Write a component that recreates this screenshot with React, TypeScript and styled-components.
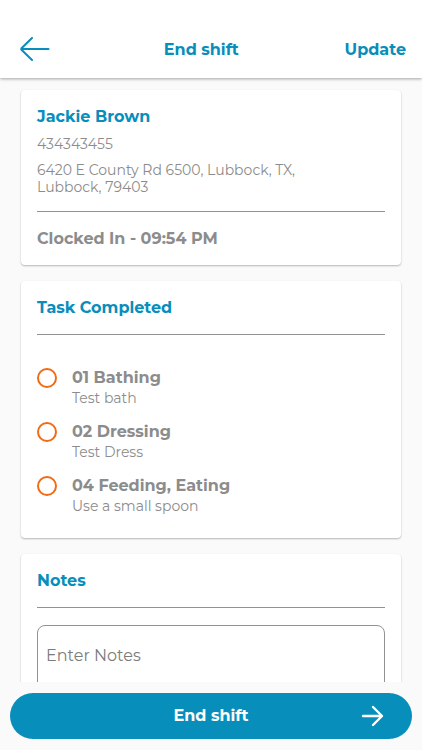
import React from "react";
import styled, { createGlobalStyle } from "styled-components";

const blue = "#078ebb";
const gray = "#8c8c8c";
const orange = "#f26a14";

const GlobalStyle = createGlobalStyle`
  *, *::before, *::after { box-sizing: border-box; }
  body {
    margin: 0;
    background: #fafafa;
    font-family: Montserrat, Inter, "Open Sans", sans-serif;
    color: ${gray};
  }
  button, input, textarea { font-family: inherit; }
  h1, h2, p, ul { margin: 0; padding: 0; }
`;

const Screen = styled.div`
  height: 100vh;
  display: flex;
  flex-direction: column;
  overflow: hidden;
`;

const Header = styled.header`
  flex: none;
  z-index: 1;
  display: flex;
  justify-content: space-between;
  align-items: center;
  height: 78px;
  padding: 22px 16px 0 20px;
  background: #fff;
  box-shadow: 0 1px 3px rgba(0, 0, 0, 0.35);
`;

const TextButton = styled.button`
  padding: 0;
  border: 0;
  background: none;
  color: ${blue};
  font-size: 16px;
  line-height: 20px;
  font-weight: 700;
`;

const BackButton = styled(TextButton)`
  display: flex;
  width: 38px;
`;

const Title = styled.h1`
  color: ${blue};
  font-size: 16px;
  line-height: 20px;
  font-weight: 700;
`;

const Content = styled.main`
  flex: 1;
  min-height: 0;
  overflow-y: auto;
  scrollbar-width: none;
  display: flex;
  flex-direction: column;
  gap: 16px;
  padding: 12px 21px;
`;

const Card = styled.section<{ $bottom?: number }>`
  flex: none;
  padding: 16px 16px ${(p) => p.$bottom ?? 16}px;
  border-radius: 4px;
  background: #fff;
  box-shadow: 0 1px 2px rgba(0, 0, 0, 0.28);
`;

const CardTitle = styled.h2`
  color: ${blue};
  font-size: 16px;
  line-height: 22px;
  font-weight: 700;
`;

const Details = styled.div`
  display: flex;
  flex-direction: column;
  gap: 9px;
  padding-top: 8px;
`;

const Detail = styled.p`
  max-width: 280px;
  font-size: 14px;
  line-height: 17px;
  font-weight: 400;
`;

const Divider = styled.hr`
  height: 1px;
  margin: 15px 0 17px;
  border: 0;
  background: #929292;
`;

const Strong = styled.p`
  font-size: 16px;
  line-height: 20px;
  font-weight: 700;
`;

const TaskList = styled.ul`
  display: flex;
  flex-direction: column;
  gap: 14px;
  padding-top: 16px;
  list-style: none;
`;

const TaskLabel = styled.label`
  display: flex;
  align-items: flex-start;
  gap: 15px;
`;

const Tick = styled.input`
  appearance: none;
  flex: none;
  width: 20px;
  height: 20px;
  margin: 0;
  border: 2px solid ${orange};
  border-radius: 50%;
  background: #fff;
  &:checked {
    background: ${orange};
    box-shadow: inset 0 0 0 3px #fff;
  }
`;

const TaskText = styled.span`
  display: flex;
  flex-direction: column;
  line-height: 20px;
`;

const TaskName = styled.span`
  font-size: 16px;
  font-weight: 700;
`;

const TaskNote = styled.span`
  font-size: 14px;
  font-weight: 400;
`;

const NotesField = styled.textarea`
  display: block;
  width: 100%;
  height: 120px;
  padding: 19px 8px;
  border: 1px solid #929292;
  border-radius: 8px;
  background: #fff;
  resize: none;
  font-size: 16px;
  line-height: 22px;
  font-weight: 400;
  &::placeholder {
    color: #7c7c7c;
    opacity: 1;
  }
`;

const Footer = styled.footer`
  flex: none;
  padding: 11px 10px;
`;

const SubmitButton = styled.button`
  width: 100%;
  height: 46px;
  display: grid;
  grid-template-columns: 1fr auto 1fr;
  align-items: center;
  padding: 0 28px;
  border: 0;
  border-radius: 23px;
  background: ${blue};
  color: #fff;
  font-size: 16px;
  line-height: 20px;
  font-weight: 700;
`;

const SubmitText = styled.span`
  grid-column: 2;
`;

const ForwardIcon = styled.svg`
  justify-self: end;
`;

const tasks = [
  { name: "01 Bathing", note: "Test bath" },
  { name: "02 Dressing", note: "Test Dress" },
  { name: "04 Feeding, Eating", note: "Use a small spoon" },
];

export default function App() {
  return (
    <>
      <GlobalStyle />
      <Screen>
        <Header>
          <BackButton type="button" aria-label="Back">
            <svg width="30" height="26" viewBox="0 0 30 26" fill="none" stroke={blue} strokeWidth="2" strokeLinecap="round" strokeLinejoin="round">
              <path d="M28.500 12H1.500M12 1L1.500 11.200Q1 12 1.500 12.800L12 23" />
            </svg>
          </BackButton>
          <Title>End shift</Title>
          <TextButton type="button">Update</TextButton>
        </Header>

        <Content>
          <Card>
            <CardTitle>Jackie Brown</CardTitle>
            <Details>
              <Detail>434343455</Detail>
              <Detail>6420 E County Rd 6500, Lubbock, TX, Lubbock, 79403</Detail>
            </Details>
            <Divider />
            <Strong>Clocked In - 09:54 PM</Strong>
          </Card>

          <Card $bottom={22}>
            <CardTitle>Task Completed</CardTitle>
            <Divider />
            <TaskList>
              {tasks.map((task) => (
                <li key={task.name}>
                  <TaskLabel>
                    <Tick type="checkbox" />
                    <TaskText>
                      <TaskName>{task.name}</TaskName>
                      <TaskNote>{task.note}</TaskNote>
                    </TaskText>
                  </TaskLabel>
                </li>
              ))}
            </TaskList>
          </Card>

          <Card>
            <CardTitle>Notes</CardTitle>
            <Divider />
            <NotesField aria-label="Notes" placeholder="Enter Notes" />
          </Card>
        </Content>

        <Footer>
          <SubmitButton type="button">
            <SubmitText>End shift</SubmitText>
            <ForwardIcon width="23" height="22" viewBox="0 0 23 22" fill="none" stroke="#fff" strokeWidth="2.400" strokeLinecap="round" strokeLinejoin="round">
              <path d="M2 11H21M12 2L21 11L12 20" />
            </ForwardIcon>
          </SubmitButton>
        </Footer>
      </Screen>
    </>
  );
}
